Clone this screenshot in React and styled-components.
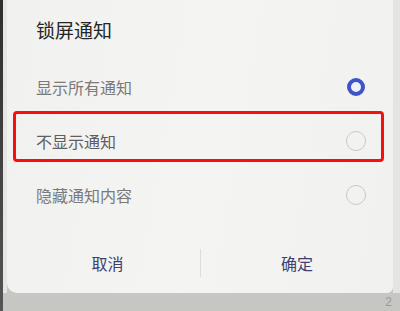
import React from "react";
import styled, { createGlobalStyle } from "styled-components";

const Global = createGlobalStyle`
  html, body { margin: 0; padding: 0; }
  body {
    width: 400px; height: 311px; overflow: hidden;
    background: #c9c9c6;
    font-family: "Noto Sans CJK SC", "Noto Sans", sans-serif;
  }
`;

const Screen = styled.div`
  display: flex;
  width: 400px;
  height: 311px;
  background: linear-gradient(#d2d2cf, #c6c6c3);
  position: relative;
`;

const EdgeDark = styled.div`
  width: 3px;
  height: 100%;
  background: linear-gradient(#2e2e2e, #555);
`;

const EdgeLight = styled.div`
  width: 4px;
  height: 293px;
  background: #e6e6e4;
`;

const RightEdge = styled.div`
  flex: 1;
  height: 293px;
  background: #e4e4e2;
`;

const Card = styled.div`
  position: relative;
  width: 386px;
  height: 293px;
  background: linear-gradient(100deg, #f1f1ef 0%, #f4f4f2 50%, #f1f1ef 100%);
  border-radius: 0 0 6px 10px;
  display: flex;
  flex-direction: column;
  box-sizing: border-box;
`;

const Title = styled.div`
  height: 60px;
  padding-left: 29px;
  display: flex;
  align-items: center;
  font-size: 19px;
  color: #262626;
  box-sizing: border-box;
  padding-bottom: 2px;
`;

const Row = styled.div`
  position: relative;
  height: 54px;
  padding: 0 27px 0 29px;
  display: flex;
  align-items: center;
  justify-content: space-between;
  font-size: 16px;
  color: ${(p) => (p.$dark ? "#5e5e5e" : "#7a7a7a")};
  &::after {
    content: "";
    display: ${(p) => (p.$highlight ? "block" : "none")};
    position: absolute;
    left: 6px;
    right: 9px;
    top: -3px;
    height: 51px;
    border: 3px solid #f5100e;
    border-radius: 4px;
    box-sizing: border-box;
  }
`;

const Radio = styled.span`
  width: ${(p) => (p.$on ? "18px" : "20px")};
  height: ${(p) => (p.$on ? "18px" : "20px")};
  border-radius: 50%;
  box-sizing: border-box;
  border: ${(p) => (p.$on ? "4.5px solid #3d53c9" : "1.2px solid #c9c9c7")};
  background: ${(p) => (p.$on ? "#eef1fb" : "transparent")};
  margin-right: ${(p) => (p.$on ? "1px" : "0")};
`;

const Footer = styled.div`
  margin-top: 14px;
  height: 54px;
  display: grid;
  grid-template-columns: 193px 1px 1fr;
  align-items: center;
`;

const Btn = styled.div`
  text-align: center;
  font-size: 16px;
  color: #40406f;
  padding-left: ${(p) => p.$pl || 0}px;
`;

const Divider = styled.div`
  width: 1px;
  height: 28px;
  background: #dcdcda;
`;

const PageNo = styled.div`
  position: absolute;
  right: 8px;
  bottom: 2px;
  font-family: "Liberation Sans", sans-serif;
  font-size: 12px;
  color: #9a9a98;
`;

export default function App() {
  return (
    <>
      <Global />
      <Screen>
        <EdgeDark />
        <EdgeLight />
        <Card>
          <Title>锁屏通知</Title>
          <Row>
            <span>显示所有通知</span>
            <Radio $on />
          </Row>
          <Row $highlight $dark>
            <span>不显示通知</span>
            <Radio />
          </Row>
          <Row>
            <span>隐藏通知内容</span>
            <Radio />
          </Row>
          <Footer>
            <Btn $pl={8}>取消</Btn>
            <Divider />
            <Btn>确定</Btn>
          </Footer>
        </Card>
        <RightEdge />
        <PageNo>2</PageNo>
      </Screen>
    </>
  );
}
